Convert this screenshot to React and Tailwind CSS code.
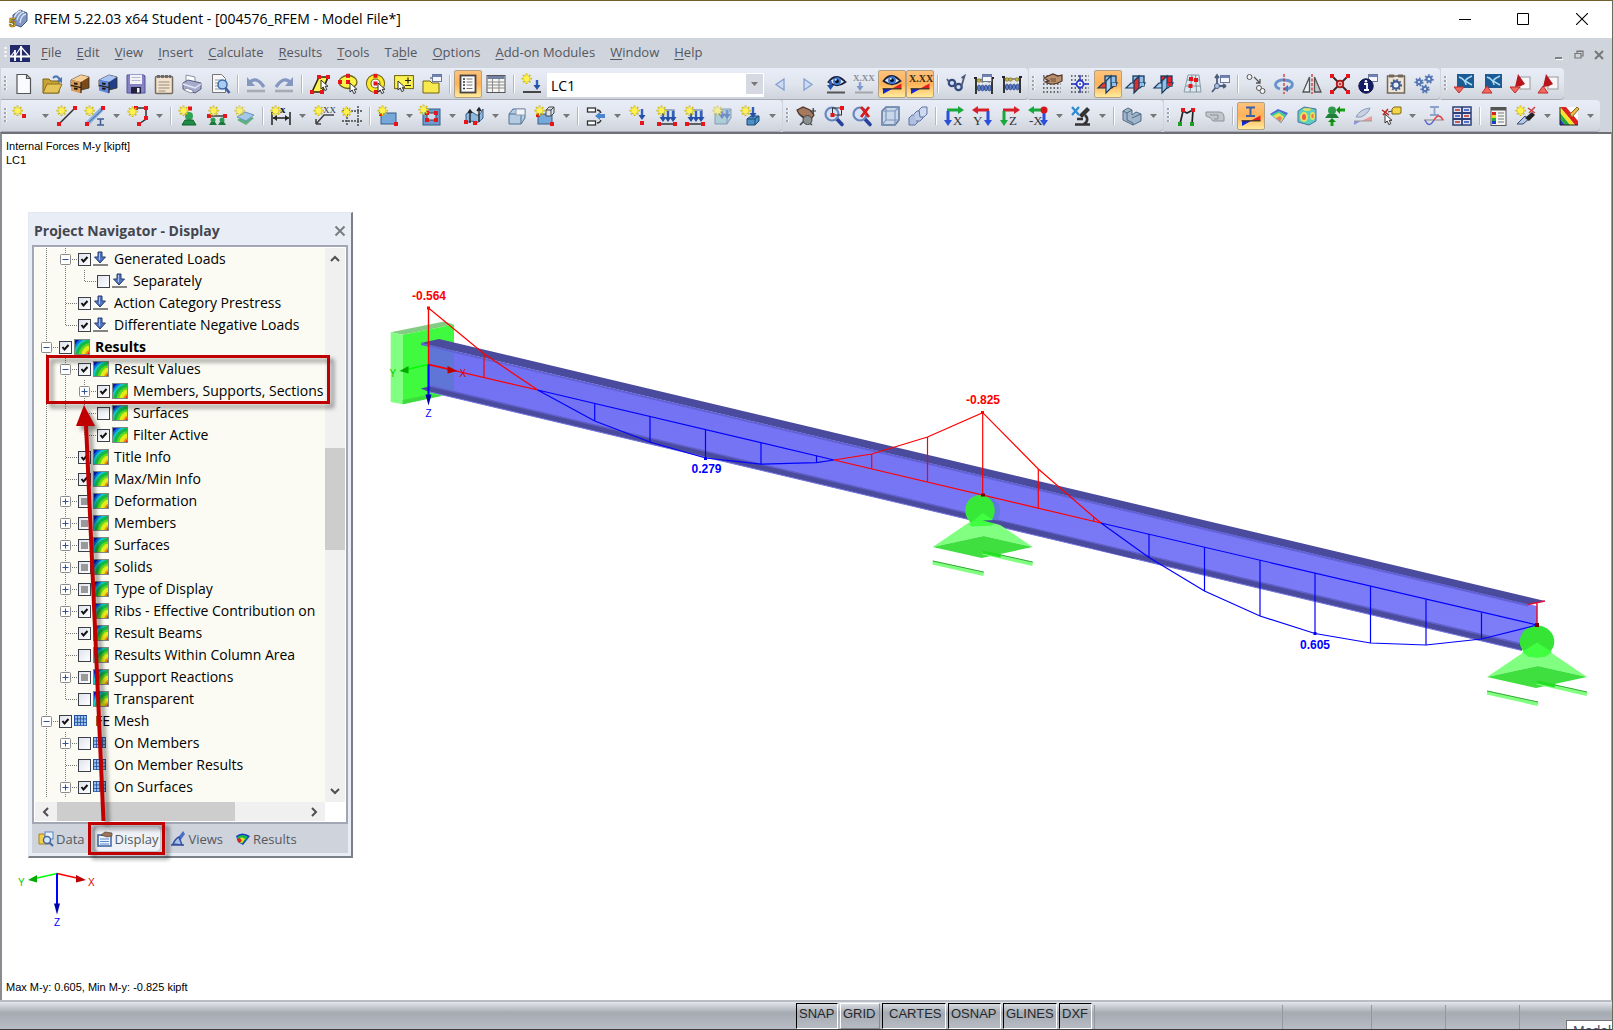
import React, { useState } from 'react';

/* ---------- small drawing parts shared by the icons ---------- */

const Star = ({ x = 0, y = 0 }) => (
  <g transform={`translate(${x - 0.5} ${y - 0.5})`}>
    <path d="M5 0v10.500M0 5.200h10.300M1.500 1.500l7.300 7.300M8.800 1.500L1.500 8.800" stroke="#c9b400" strokeWidth="1.700" />
    <path d="M5 1v8.500M1 5.200h8.300M2.200 2.200l5.800 5.800M8 2.200L2.200 8" stroke="#f6e63a" strokeWidth="1" />
    <circle cx="5.100" cy="5.200" r="2.600" fill="#fff251" />
  </g>
);

const Dot = ({ x, y, c = '#e8141c' }) => (
  <rect x={x - 2} y={y - 2} width="4" height="4" fill={c} />
);

const Cursor = ({ x = 0, y = 0 }) => (
  <path transform={`translate(${x} ${y})`} d="M0 0v9l2.200-2 1.600 3.600 2-1L4.200 6.300H7z" fill="#fff" stroke="#333" strokeWidth="1" />
);

const DownArrow = ({ x, y, h = 10 }) => (
  <g transform={`translate(${x} ${y})`}>
    <path d={`M0 0V${h - 3}`} stroke="#2f5fbf" strokeWidth="2.400" />
    <path d={`M-3.500 ${h - 5}H3.500L0 ${h}z`} fill="#2450a8" />
  </g>
);

const Cabinet = ({ front, side, top }) => (
  <>
    <path d="M1 6l10-5 8 2v11l-8 2-10-3z" fill={side} stroke="#3a2c1c" strokeWidth=".8" />
    <path d="M1 6l10-5 8 2-8 5z" fill={top} />
    <path d="M1 6l10 2v11.500L1 16.500z" fill={front} />
    <path d="M1 11.300l10 2.300M11 8v11" stroke="#2b2118" strokeWidth="1.200" />
    <path d="M4 9.300l3.500.7M4 14.300l3.500.7" stroke="#1d1611" strokeWidth="1.800" />
  </>
);

const Eye = ({ x = 10, y = 7 }) => (
  <g transform={`translate(${x} ${y})`}>
    <path d="M-8.500 1Q-1-9 8.500 1Q0 7.500-8.500 1z" fill="#dfe8f8" stroke="#1b2340" strokeWidth="1.800" />
    <circle r="3.900" cy=".2" fill="#3f77cf" />
    <circle r="1.900" cy=".2" fill="#081028" />
    <circle r=".9" cx="-1.200" cy="-1.200" fill="#fff" />
  </g>
);

const Wedge = () => (
  <>
    <path d="M1 20v-5h9z" fill="#1428d8" />
    <path d="M10 14.500l9.500-5v5z" fill="#e02020" />
    <path d="M.5 14.800h19" stroke="#2b2420" strokeWidth="1.200" />
  </>
);

const Abacus = ({ y = 3 }) => (
  <g transform={`translate(0 ${y})`}>
    <path d="M2 0v17M18 0v17M0 1h3M17 1h3" stroke="#222" strokeWidth="1.800" />
    <path d="M2 3h16M2 11h16" stroke="#444" />
    <g fill="#c9b640" stroke="#6c6120" strokeWidth=".6">
      <circle cx="5" cy="3.500" r="1.800" /><circle cx="8.500" cy="3.500" r="1.800" /><circle cx="15" cy="3.500" r="1.800" />
    </g>
    <g fill="#5b7fca" stroke="#253c7c" strokeWidth=".7">
      <ellipse cx="5" cy="11" rx="1.600" ry="3" /><ellipse cx="8.500" cy="11" rx="1.600" ry="3" />
      <ellipse cx="12" cy="11" rx="1.600" ry="3" /><ellipse cx="15.500" cy="11" rx="1.600" ry="3" />
    </g>
  </g>
);

const Window = ({ x, y }) => (
  <g transform={`translate(${x} ${y})`}>
    <rect x=".5" y=".5" width="9" height="7" fill="#f4f6fb" stroke="#6b7899" />
    <path d="M1 2h8" stroke="#6f83b8" strokeWidth="2" />
  </g>
);

const Planes = ({ a, b, c }) => (
  <>
    <rect x="7" y="2" width="11" height="10" fill={a} stroke="#173a5e" strokeWidth="1.300" />
    <path d="M0 14l5-5h14l-5 5z" fill={b} stroke="#173a5e" strokeWidth="1.200" />
    <path d="M8 7l5-5v12l-5 5z" fill={c} stroke="#173a5e" strokeWidth="1.200" />
    <path d="M14 9v3h4V9z" fill={a} />
  </>
);

const Grid = ({ c = '#444' }) => (
  <path d="M1 2h18M1 6h18M1 10h18M1 14h18M1 18h18" stroke={c} strokeWidth="1.500" strokeDasharray="1.500 2" />
);

const Lens = ({ children }) => (
  <>
    <path d="M11 11l7 7.500" stroke="#27429a" strokeWidth="3.600" strokeLinecap="round" />
    <circle cx="8" cy="8" r="6.500" fill="#d4e2f6" stroke="#6a86bd" strokeWidth="2.200" />
    {children}
  </>
);

const AxisView = ({ label, h, v, flip }) => (
  <>
    <path d={flip ? 'M17 4H5' : 'M3 4h12'} stroke={h} strokeWidth="3" />
    <path d={flip ? 'M6 0v8L0 4z' : 'M14 0v8l6-4z'} fill={h} />
    <path d={flip ? 'M16 5v10' : 'M4 5v10'} stroke={v} strokeWidth="3" />
    <path d={flip ? 'M12 14h8l-4 6z' : 'M0 14h8l-4 6z'} fill={v} />
    <text x={flip ? 1 : 9} y="19" fontSize="13" fontFamily="Liberation Serif" fill="#333">{label}</text>
  </>
);

const Gear = ({ x, y, r = 3, c = '#5577b4' }) => (
  <g transform={`translate(${x} ${y})`}>
    <circle r={r} fill="#e8effa" stroke={c} strokeWidth="2.200" />
    <circle r={r + 1.500} fill="none" stroke={c} strokeWidth="1.800" strokeDasharray="1.600 1.800" />
  </g>
);

const LoadComb = () => (
  <>
    <path d="M5 4h12v10" stroke="#55709e" strokeWidth="1.200" />
    {[6, 11, 16].map(x => <DownArrow key={x} x={x} y={5} h={11} />)}
    <path d="M2 18h16" stroke="#333" strokeWidth="1.500" />
    <Dot x={2} y={18} /><Dot x={18} y={18} />
    <Star />
  </>
);

const Block = ({ tint = '#8db4dc' }) => (
  <>
    <path d="M2 8l4-5h12v9l-4 6H2z" fill={tint} stroke="#4f7193" />
    <path d="M2 8h12v10M14 8l4-5" fill="none" stroke="#4f7193" />
  </>
);

/* ---------- toolbar icons, 20 x 20 ---------- */

const ICONS = {
  new: <path d="M3 .5h9.500l4 4v15H3zM12.500 .5v4h4" fill="#fafbfe" stroke="#555" strokeWidth="1.200" />,
  open: (
    <>
      <path d="M1 5h6l2 2h8v12H1z" fill="#c9a336" stroke="#7c6216" />
      <path d="M1 19l4-9h15l-4 9z" fill="#e5c55a" stroke="#8b701d" />
      <path d="M11 4q4-4 7 2" stroke="#4a76b4" strokeWidth="2.200" fill="none" />
      <path d="M20 3v6l-5-2z" fill="#4a76b4" />
    </>
  ),
  cabinet: <Cabinet front="#d99a55" side="#7a4a1c" top="#f4cf98" />,
  cabinetBlue: <Cabinet front="#5f88dc" side="#20408a" top="#a8c3f2" />,
  save: (
    <>
      <path d="M1 1h17l1 1v17H1z" fill="#8583c4" stroke="#55539a" />
      <rect x="4" y="1" width="12" height="9" fill="#f2f3fa" />
      <path d="M5.500 3.500h9M5.500 6.500h9" stroke="#b7b9cf" />
      <rect x="5" y="13" width="10" height="6.500" fill="#22223c" />
      <rect x="11" y="14" width="2.500" height="4.500" fill="#f0f0fa" />
    </>
  ),
  clipboard: (
    <>
      <rect x="1.500" y="2.500" width="17" height="17" rx="1" fill="#f2e3cf" stroke="#776b5e" strokeWidth="1.500" />
      <path d="M3 2.500h14" stroke="#6a6a72" strokeWidth="3" strokeDasharray="3 1" />
      <path d="M4.500 8h11M4.500 11h11M4.500 14h11M4.500 17h7" stroke="#9a8b7b" />
    </>
  ),
  print: (
    <>
      <path d="M4 1l9 2v7l-9-2z" fill="#fff" stroke="#8b8fa6" />
      <path d="M1 9l5-3 13 3v6l-6 4-12-4z" fill="#a7abcb" stroke="#565a7e" />
      <path d="M1 10l12 4 6-4" stroke="#e5e7f4" fill="none" strokeWidth="1.500" />
      <path d="M5 14l7 3-3 2-7-3z" fill="#fff" stroke="#8b8fa6" />
    </>
  ),
  preview: (
    <>
      <path d="M2.500 .5h9l4 4v14h-13z" fill="#f5f6f9" stroke="#777" />
      <path d="M5 6h7M5 9h5M5 12h4M5 15h5" stroke="#999" />
      <circle cx="12.500" cy="10.500" r="4.500" fill="#a9cdf0" stroke="#3c6aa8" strokeWidth="1.500" />
      <path d="M15.500 14l4 5" stroke="#3c5f98" strokeWidth="2.600" />
    </>
  ),
  undo: (
    <>
      <path d="M3 9q7-8 15 4" stroke="#8497c0" strokeWidth="3.200" fill="none" />
      <path d="M1 3v9h8z" fill="#8497c0" />
      <path d="M1 17h18" stroke="#a6aab4" strokeWidth="2.600" />
    </>
  ),
  redo: (
    <>
      <path d="M17 9Q10 1 2 13" stroke="#8497c0" strokeWidth="3.200" fill="none" />
      <path d="M19 3v9h-8z" fill="#8497c0" />
      <path d="M1 17h18" stroke="#a6aab4" strokeWidth="2.600" />
    </>
  ),
  selPoly: (
    <>
      <path d="M2 18L9 3h9l-6 15z" fill="#fbf151" stroke="#2a2508" strokeWidth="1.600" />
      <Dot x={9} y={3} /><Dot x={18} y={3} /><Dot x={2} y={18} /><Dot x={12} y={18} />
      <Cursor x={11} y={6} />
    </>
  ),
  selEllipse: (
    <>
      <ellipse cx="10" cy="8" rx="9" ry="6.500" fill="#fbf14a" stroke="#6e6410" strokeWidth="1.300" />
      <Dot x={10} y={1.800} /><Dot x={2} y={8} /><Dot x={10} y={8} />
      <Cursor x={12} y={9} />
    </>
  ),
  selRing: (
    <>
      <circle cx="9.500" cy="9.500" r="6.800" fill="#f3f5fa" stroke="#6e6410" strokeWidth="5.600" />
      <circle cx="9.500" cy="9.500" r="6.800" fill="none" stroke="#fbe92a" strokeWidth="3.600" />
      <Dot x={9.500} y={9.500} /><Dot x={9.500} y={1.800} /><Dot x={10} y={18} />
      <Cursor x={12} y={9} />
    </>
  ),
  selPlus: (
    <>
      <rect x=".6" y="1.600" width="18.800" height="13" fill="#fbf151" stroke="#6e6410" />
      <path d="M14 3.500v6M11 6.500h6M11 11.500h6" stroke="#222" strokeWidth="1.200" />
      <Cursor x={4} y={7} />
    </>
  ),
  selFolder: (
    <>
      <path d="M1 7h7l2 2h7v10H1z" fill="#f7e94e" stroke="#716612" />
      <path d="M8 4h3" stroke="#444" />
      <Window x={10} y={0} />
    </>
  ),
  navigator: (
    <>
      <rect x="2.500" y="1.500" width="15" height="17" fill="#fdfdfd" stroke="#444" strokeWidth="1.800" />
      <path d="M5 5h2M5 8h2M5 11h2M5 14.500h2" stroke="#333" strokeWidth="1.500" />
      <path d="M8.500 5h6M8.500 8h6M8.500 11h6M8.500 14.500h6" stroke="#777" strokeWidth="1.200" />
    </>
  ),
  table: (
    <>
      <rect x="1" y="1.500" width="18" height="17" fill="#f6f6f4" stroke="#555" />
      <rect x="1.500" y="2" width="17" height="3" fill="#7281a0" />
      <path d="M1 8h18M1 11h18M1 14h18M6.500 5v13M13 5v13" stroke="#8a8a8a" />
    </>
  ),
  newLoad: <><Star /><DownArrow x={15} y={6} h={10} /><path d="M1 18h18" stroke="#444" strokeWidth="2" /></>,
  prev: <path d="M14 5v11L6 10.500z" fill="#cddcf4" stroke="#84a0cf" strokeWidth="1.300" />,
  next: <path d="M6 5v11l8-5.500z" fill="#cddcf4" stroke="#84a0cf" strokeWidth="1.300" />,
  loadEye: <><Eye x={11} y={7} /><DownArrow x={4.500} y={7} h={9} /><path d="M1 18.500h18" stroke="#555" strokeWidth="2" /></>,
  loadVal: (
    <>
      <text x="-1" y="7" fontSize="9" fontWeight="bold" fontFamily="Liberation Serif" fill="#8b8d94">X.XX</text>
      <g opacity=".5"><DownArrow x={6} y={8} h={9} /></g>
      <path d="M1 18.500h18" stroke="#a5a7ac" strokeWidth="2" />
    </>
  ),
  resEye: <><Eye x={10} y={6} /><Wedge /></>,
  resVal: <><text x="-1" y="8" fontSize="10" fontWeight="bold" fontFamily="Liberation Serif" fill="#3b2a18">X.XX</text><Wedge /></>,
  glasses: (
    <>
      <circle cx="6" cy="9" r="3.200" fill="#cfe0f5" stroke="#34497e" strokeWidth="2.200" />
      <circle cx="12.500" cy="13" r="3.200" fill="#cfe0f5" stroke="#34497e" strokeWidth="2.200" />
      <path d="M3 8L1 5M9 10l1.500 1M15.500 12l3-10-3 2" stroke="#4f5a78" strokeWidth="1.800" fill="none" />
    </>
  ),
  abacusWin: <><Abacus /><Window x={8} y={0} /></>,
  abacus: <Abacus y={2} />,
  gridHand: <><Grid /><path d="M2 4l4-2 5-2 5 2 4-1v6l-4 2-4 1H8L3 8l4-1z" fill="#b98f6c" stroke="#4d3428" strokeWidth="1.200" /><path d="M8 5h6M9 7h5" stroke="#6b4a38" /></>,
  gridSnap: (
    <>
      <Grid />
      <path d="M10 1v18M1 10h18" stroke="#2a38c8" strokeWidth="1.500" />
      <circle cx="10" cy="10" r="3.500" fill="#fff" stroke="#2a38c8" strokeWidth="1.800" />
      <circle cx="10" cy="10" r="1" fill="#2a38c8" />
    </>
  ),
  planeXY: <Planes a="#8fc0e8" b="#e53c30" c="#a9d0ee" />,
  planeYZ: <Planes a="#8fc0e8" b="#a9d0ee" c="#e02c2c" />,
  planeXZ: <Planes a="#e5232b" b="#a9d0ee" c="#8fc0e8" />,
  gridTilt: (
    <>
      <path d="M6 1L2 18h17l-2-17z" fill="#dde8ee" stroke="#8c9ba4" />
      <path d="M5 6h13M3.500 12h15M10 1L8 18M13.500 1l1 17" stroke="#78909c" />
      <Dot x={9} y={5} /><Dot x={14} y={6} /><Dot x={8.500} y={12} />
    </>
  ),
  axesWin: <><path d="M7 2v10h9M7 12l-5 6M5 4l2-3 2 3M16 12l-3-2M16 12l-3 2" stroke="#4c5d7c" strokeWidth="1.800" fill="none" /><circle cx="7" cy="12" r="2.500" fill="#aac2e4" stroke="#4c5d7c" /><Window x={10} y={1} /></>,
  copy: (
    <g fill="#f3f4f6" stroke="#555">
      <circle cx="3.500" cy="3" r="2.500" />
      <path d="M8 3l6 6m0-4v4h-4" fill="none" strokeWidth="1.300" />
      <circle cx="13" cy="14" r="2.500" /><circle cx="16.500" cy="17" r="2.500" />
    </g>
  ),
  rotate: (
    <>
      <path d="M6 15q-6-2-4-6 3-4 9-3 9 1 7 6-1 2-5 3" fill="none" stroke="#6793cc" strokeWidth="2.800" />
      <path d="M14 11v7l-5-3z" fill="#4878b8" />
      <path d="M10 0v20" stroke="#d02020" strokeWidth="1.200" strokeDasharray="3 1.500" />
    </>
  ),
  mirror: (
    <>
      <path d="M7.500 3v15H1z" fill="#f0f1f4" stroke="#555" strokeWidth="1.300" />
      <path d="M12.500 3v15H19z" fill="#c6c8ce" stroke="#555" strokeWidth="1.300" />
      <path d="M10 0v20" stroke="#d02020" strokeWidth="1.200" strokeDasharray="3 1.500" />
    </>
  ),
  explode: (
    <>
      <path d="M2 2l16 16M18 2L2 18" stroke="#3c2424" strokeWidth="1.800" />
      <circle cx="10" cy="10" r="3.300" fill="#f3b0b0" stroke="#b01818" strokeWidth="1.800" />
      <circle cx="10" cy="10" r="1" fill="#b01818" />
      <Dot x={2} y={2} /><Dot x={18} y={2} /><Dot x={2} y={18} /><Dot x={18} y={18} />
    </>
  ),
  info: (
    <>
      <Window x={10} y={0} />
      <circle cx="8" cy="12" r="7.200" fill="#141c66" stroke="#0b1040" />
      <path d="M6 10h3v6M6 16h5" stroke="#fff" strokeWidth="1.800" fill="none" />
      <circle cx="8" cy="7.300" r="1.300" fill="#fff" />
    </>
  ),
  settings: (
    <>
      <rect x="1.500" y="2" width="17" height="17" fill="#f0e5d4" stroke="#6f675c" strokeWidth="1.500" />
      <path d="M3 2h5M12 2h5" stroke="#6f675c" strokeWidth="3" />
      <Gear x={10} y={11} r={3.600} c="#3e5c92" />
    </>
  ),
  gears: <><Gear x={5} y={8} r={2.200} /><Gear x={15} y={5} r={2.400} /><Gear x={11} y={15} r={2.200} /></>,
  dxIn: <><rect x="3" y="0" width="17" height="14" fill="#1c5a94" /><path d="M5 3q6 2 7 8M18 2q-5 2-7 5l7 4" stroke="#a8dcf5" strokeWidth="1.500" fill="none" /><path d="M0 13h10l-5 6z" fill="#f06a62" stroke="#c22a26" /></>,
  dxOut: <><rect x="3" y="0" width="17" height="14" fill="#1c5a94" /><path d="M5 3q6 2 7 8M18 2q-5 2-7 5l7 4" stroke="#a8dcf5" strokeWidth="1.500" fill="none" /><path d="M0 19h10l-5-7z" fill="#f06a62" stroke="#c22a26" /></>,
  pdfIn: <><rect x="10" y="3" width="10" height="12" fill="#f6f6f8" stroke="#999" /><path d="M5 13L8 0l7 10-4 2z" fill="#b8141c" /><path d="M0 13h10l-5 6z" fill="#f06a62" stroke="#c22a26" /></>,
  pdfOut: <><rect x="10" y="3" width="10" height="12" fill="#f6f6f8" stroke="#999" /><path d="M5 13L8 0l7 10-4 2z" fill="#b8141c" /><path d="M0 19h10l-5-7z" fill="#f06a62" stroke="#c22a26" /></>,

  node: <><Star x={-1} /><Dot x={10} y={10} /></>,
  line: <><path d="M2 18L18 2" stroke="#333" strokeWidth="1.600" /><Dot x={2} y={18} /><Dot x={18} y={2} /><Star /></>,
  member: (
    <>
      <path d="M3 17L17 3" stroke="#87aee0" strokeWidth="4.500" />
      <path d="M2 18L18 3" stroke="#44638e" />
      <Dot x={2} y={18} /><Dot x={18} y={2} /><Star />
      <path d="M12 13h7M12 19h7M15.500 13v6" stroke="#3d5f95" strokeWidth="1.600" />
    </>
  ),
  polyline: <><path d="M8 2h10v11l-7 5" stroke="#333" fill="none" strokeWidth="1.500" /><Dot x={8} y={2} /><Dot x={18} y={2} /><Dot x={18} y={12} /><Dot x={11} y={18} /><Star y={1} /></>,
  nodeSupport: <><Dot x={11} y={2.500} /><circle cx="10" cy="10" r="4" fill="#30a456" /><path d="M3 19l3-5h8l3 5z" fill="#1f8d44" stroke="#12612c" /><Star /></>,
  lineSupport: <><path d="M1 10h18" stroke="#333" strokeWidth="1.400" /><circle cx="6" cy="14" r="2.500" fill="#2a9b4e" /><circle cx="15" cy="14" r="2.500" fill="#2a9b4e" /><path d="M2 19l2-3h4l2 3zM11 19l2-3h4l2 3z" fill="#1b7a3a" /><Dot x={2} y={10} /><Dot x={18} y={10} /><Star x={2} /></>,
  surfSupport: <><path d="M2 14l8-5 9 3-8 7z" fill="#5fb083" /><path d="M2 11l8-5 9 3-8 6z" fill="#a4c8e8" stroke="#6d96b8" /><g opacity=".8"><Star /></g></>,
  dimension: <><path d="M1 6v13M19 6v13M2 12h16" stroke="#222" strokeWidth="1.500" /><path d="M2 12l4-3v6zM18 12l-4-3v6z" fill="#222" /><text x="9" y="7" fontSize="11" fontWeight="bold" fontFamily="Liberation Serif" fill="#222">x</text><Star /></>,
  comment: <><path d="M2 18l8-9h10M2 18v-5M2 18h5" stroke="#444" fill="none" strokeWidth="1.600" /><text x="9" y="7" fontSize="9" fontFamily="Liberation Serif" fill="#333">XX</text><Star /></>,
  guide: <><path d="M5 2v18M16 0v20M0 5h20M0 15h20" stroke="#444" strokeWidth="1.400" strokeDasharray="2 1" /><Star y={1} /></>,
  surface: <><rect x="3" y="7" width="15" height="11" fill="#77a8da" stroke="#375f89" /><Dot x={3} y={8} /><Dot x={18} y={18} /><Star /></>,
  opening: <><rect x="2" y="3" width="17" height="16" fill="#6b9ccd" stroke="#375f89" /><rect x="6" y="7" width="9" height="7" fill="#c7d9ec" stroke="#444" /><Dot x={6} y={7} /><Dot x={15} y={7} /><Dot x={6} y={14} /><Dot x={15} y={14} /><Star x={-2} y={-1} /></>,
  curved: <><path d="M2 8q5-4 9 0t8-5v9q-5 6-8 4t-9 1z" fill="#8fb8de" stroke="#375f89" /><path d="M6 4v13M15 2v14M4 7l2-3 2 3M13 5l2-3 2 3" stroke="#222" strokeWidth="1.400" fill="none" /><Dot x={2} y={16} /><Dot x={11} y={17} /></>,
  solid: <><Block tint="#b4cbe2" /><rect x="9" y="3" width="9" height="6" fill="#f0f3f8" stroke="#8f9db5" /></>,
  solidSet: <><rect x="3" y="8" width="14" height="10" fill="#77a8da" stroke="#375f89" /><path d="M11 4l3-3h5v6l-3 3h-5zM11 4h5v6M16 4l3-3" fill="#dce4ee" stroke="#444" /><Dot x={3} y={9} /><Dot x={17} y={18} /><Star /></>,
  connect: <><rect x="1.500" y="2" width="8" height="4" fill="#fff" stroke="#333" strokeWidth="1.300" /><rect x="1.500" y="15" width="8" height="4" fill="#fff" stroke="#333" strokeWidth="1.300" /><path d="M11 4q3 0 4 3M11 17q3 0 4-3" stroke="#333" fill="none" strokeWidth="1.300" /><path d="M13 8h6v4h-6z" fill="#4a86cf" /><path d="M14 6v8l-5-4z" fill="#4a86cf" /></>,
  nodalLoad: <><DownArrow x={13} y={3} h={11} /><Dot x={13} y={17} /><Star x={1} /></>,
  loadComb: <LoadComb />,
  surfLoad: <g opacity=".6"><Block tint="#8fc2cf" /><DownArrow x={9} y={4} h={9} /><DownArrow x={14} y={4} h={9} /><Star /></g>,
  solidLoad: <><path d="M6 13l4-3h8v5l-4 4H6z" fill="#4d90c6" stroke="#1f4c74" /><path d="M6 13h8v6M14 13l4-3" stroke="#1f4c74" fill="none" /><DownArrow x={12} y={1} h={11} /><Star /></>,

  pan: <><path d="M1 4l6-3 7 3 4 5-3 4-6-1-6-4z" fill="#a5795c" stroke="#4d3428" strokeWidth="1.200" /><path d="M4 9l12 10M4 19l9-9" stroke="#444" strokeWidth="1.600" /><circle cx="11.500" cy="14" r="4.500" fill="#8b8f8f" stroke="#444" /><path d="M14.500 5h5.500M17.200 2v6" stroke="#333" strokeWidth="1.200" /></>,
  zoomWin: <Lens><rect x="8.500" y="2" width="9" height="7" fill="none" stroke="#333" /><Dot x={8.500} y={9} /><Dot x={18} y={2} /></Lens>,
  zoomOff: <Lens><path d="M9 1l8 10M17 1L9 11" stroke="#d81a1a" strokeWidth="2.800" /></Lens>,
  wireCube: <><path d="M2 5l4-4h13v13l-4 5H2z" fill="#c9d7ea" stroke="#5e779f" strokeWidth="1.500" /><path d="M2 5h13v14M15 5l4-4M6 1v13h13M6 14l-4 5" fill="none" stroke="#7f96bb" strokeWidth="1.200" /></>,
  cascade: <><path d="M1 12l3-3h6v7l-3 3H1z" fill="#aebfe0" stroke="#5e729f" /><path d="M6 8l3-3h6v7l-3 3H8" fill="#bccbe8" stroke="#5e729f" /><path d="M11 4l3-3h5v7l-3 3h-4z" fill="#cfdaf0" stroke="#5e729f" /></>,
  viewX: <AxisView label="X" h="#18a83c" v="#2a4fd8" />,
  viewY: <AxisView label="Y" h="#d8202a" v="#2a4fd8" flip />,
  viewZ: <AxisView label="Z" h="#d8202a" v="#18a83c" />,
  viewMinusX: <><AxisView label="-X" h="#18a83c" v="#2a4fd8" flip /><circle cx="16" cy="4" r="3.500" fill="#d8141c" /></>,
  microscope: <><path d="M8 9l8-8 3 3-8 8z" fill="#333" /><path d="M4 18.500h15M14 9q5 5-1 9M6 13h6" stroke="#333" strokeWidth="2.600" fill="none" /><path d="M1 1l7 8M8 1L1 9" stroke="#2c8ad0" strokeWidth="2.200" /></>,
  lSolid: <><path d="M1 5l5-3 4 2v5l4-3 5 2v7l-8 4-10-5z" fill="#9fb6cc" stroke="#51697f" /><path d="M1 5l4 2v7l6 3v2M5 7l5-3M10 12l9-4" fill="none" stroke="#51697f" /></>,

  frame: <><path d="M3 18L6 5l4 2 6-3-1 14" stroke="#222" strokeWidth="1.700" fill="none" /><Dot x={6} y={4} /><Dot x={16} y={4} /><Dot x={3} y={18} c="#18a020" /><Dot x={15} y={18} c="#18a020" /></>,
  plate: <><path d="M1 6h13q5 0 5 5v4H8q-2-4-7-5z" fill="#c3c6cc" stroke="#8d9199" /><path d="M5 9h8v4H9" fill="none" stroke="#8d9199" /></>,
  diagram: <><path d="M5 1.500h9M5 10h9M9.500 1.500V10" stroke="#3c5fa8" strokeWidth="2" /><Wedge /></>,
  rainbow: (
    <>
      <path d="M1 8l8-5 10 4-7 10z" fill="#4c6ad8" />
      <path d="M2 9l8-4 7 4-5 7z" fill="#46cf9a" />
      <path d="M4 10l6-3 5 4-3 5z" fill="#e9e25a" />
      <path d="M7 12l4-2 2 2-2 4z" fill="#ef7d5c" />
    </>
  ),
  rainbowSolid: (
    <>
      <path d="M1 5l6-4 12 2v12l-7 4-11-3z" fill="#5bcfc0" stroke="#4a72a0" />
      <ellipse cx="7" cy="11" rx="4" ry="5" fill="#e9e25a" /><ellipse cx="7" cy="11" rx="2" ry="3" fill="#ef5a4c" />
      <ellipse cx="15.500" cy="10" rx="2.500" ry="4" fill="#e9e25a" /><ellipse cx="15.500" cy="10" rx="1.200" ry="2.200" fill="#ef7a4c" />
      <ellipse cx="10" cy="3.500" rx="4" ry="1.300" fill="#e9e25a" />
    </>
  ),
  reaction: <><circle cx="7" cy="4.500" r="4" fill="#2c9a4a" /><path d="M0 12l3-4h8l3 4z" fill="#1f7f3a" /><path d="M20 4h-5" stroke="#12a012" strokeWidth="3" /><path d="M15 0v8l-4-4z" fill="#0f8a0f" /><path d="M7 20v-5" stroke="#12a012" strokeWidth="3" /><path d="M3 16h8l-4-4z" fill="#0f8a0f" /></>,
  section: <><path d="M3 11q4-8 14-9-2 6-9 9z" fill="#c9d2e4" stroke="#8a98b4" /><path d="M1 19v-4h7z" fill="#8a97e0" /><path d="M8 15l11-5v5z" fill="#ee9a9a" /><path d="M1 15h18" stroke="#999" /></>,
  valueCursor: <><path d="M1 4l7 5M7 3L2 9" stroke="#c02020" strokeWidth="1.500" /><path d="M7 6l4-1" stroke="#333" /><path d="M11 3l2-2h7v6l-2 1h-7z" fill="#f2d648" stroke="#7a6818" /><Cursor x={4} y={8} /></>,
  sectionCurve: <><path d="M6 1h9M6 9h9M10.500 1v8" stroke="#8ea2cc" strokeWidth="1.800" /><path d="M0 14h20" stroke="#888" /><path d="M1 14q4 9 9 0" fill="none" stroke="#5868d0" strokeWidth="1.500" /><path d="M10 14q5-8 9 0" fill="none" stroke="#e04848" strokeWidth="1.500" /></>,
  multiTable: <><rect x="1" y="1" width="18" height="18" fill="#dfe3ef" stroke="#2d3f76" strokeWidth="1.500" /><path d="M1 7h18M1 13h18M10 1v18" stroke="#2d3f76" strokeWidth="1.800" /><path d="M3 4h5M12 10h5M3 16h5" stroke="#c42a2a" strokeWidth="1.500" /><path d="M12 4h5M3 10h5M12 16h5" stroke="#2c4cc4" strokeWidth="1.500" /></>,
  legend: <><rect x="3" y="1.500" width="15" height="18" fill="#f5f5f5" stroke="#555" /><path d="M3 3h15" stroke="#555" strokeWidth="3" /><path d="M6 6v3" stroke="#d82020" strokeWidth="4" /><path d="M6 9v3" stroke="#e8d820" strokeWidth="4" /><path d="M6 12v3" stroke="#20a838" strokeWidth="4" /><path d="M6 15v3" stroke="#2038c8" strokeWidth="4" /><path d="M10 7h6M10 10h6M10 13h6M10 16h6" stroke="#777" /></>,
  cut: <><path d="M1 18l8-8 4 3-6 5z" fill="#b8c8e4" stroke="#344c78" /><path d="M9 12l7-6 3 3-6 6z" fill="#222" /><path d="M12 2l7 5M19 1l-6 6" stroke="#c84040" strokeWidth="1.500" /><Star /></>,
  colors: (
    <>
      <rect x="1" y="1" width="18" height="18" fill="#fff" />
      <path d="M1 1h6l12 14v4h-3z" fill="#e02020" />
      <path d="M1 1l15 18h-5L1 7z" fill="#f4e428" />
      <path d="M1 7l10 12H6L1 13z" fill="#28a838" />
      <path d="M1 13l5 6H1z" fill="#2038c8" />
      <path d="M11 8l7-7 2 2-7 8z" fill="#e9b84a" stroke="#8c6a1c" />
      <path d="M1 1v18h18" fill="none" stroke="#222" />
    </>
  ),
};

/* '|' is a separator, 'v' a drop-down arrow, a trailing * marks a pressed button */
const ROW1_FILE = ['new', 'open', 'cabinet', 'cabinetBlue', 'save', 'clipboard', 'print', 'preview', '|', 'undo', 'redo', '|', 'selPoly', 'selEllipse', 'selRing', 'selPlus', 'selFolder', '|', 'navigator*', 'table', '|', 'newLoad', 'combo', 'prev', 'next', 'loadEye', 'loadVal', 'resEye*', 'resVal*', '|', 'glasses', 'abacusWin', 'abacus'];
const ROW1_GRID = ['gridHand', 'gridSnap', 'planeXY*', 'planeYZ', 'planeXZ', 'gridTilt', 'axesWin', '|', 'copy', 'rotate', 'mirror', 'explode', 'info', 'settings', 'gears'];
const ROW1_EXPORT = ['dxIn', 'dxOut', 'pdfIn', 'pdfOut'];
const ROW2_MODEL = ['node', 'v', 'line', 'member', 'v', 'polyline', 'v', '|', 'nodeSupport', 'lineSupport', 'surfSupport', '|', 'dimension', 'v', 'comment', 'guide', '|', 'surface', 'v', 'opening', 'v', 'curved', 'v', 'solid', 'solidSet', 'v', '|', 'connect', 'v', 'nodalLoad', 'loadComb', 'loadComb', 'surfLoad', 'solidLoad', 'v'];
const ROW2_VIEW = ['pan', 'zoomWin', 'zoomOff', 'wireCube', 'cascade', '|', 'viewX', 'viewY', 'viewZ', 'viewMinusX', 'v', 'microscope', 'v', '|', 'lSolid', 'v'];
const ROW2_RESULT = ['frame', 'plate', '|', 'diagram*', 'rainbow', 'rainbowSolid', 'reaction', 'section', 'valueCursor', 'v', 'sectionCurve', 'multiTable', '|', 'legend', 'cut', 'v', 'colors', 'v'];

const MENU = [
  ['', 'F', 'ile'], ['', 'E', 'dit'], ['', 'V', 'iew'], ['', 'I', 'nsert'], ['', 'C', 'alculate'], ['', 'R', 'esults'],
  ['', 'T', 'ools'], ['Ta', 'b', 'le'], ['', 'O', 'ptions'], ['', 'A', 'dd-on Modules'], ['', 'W', 'indow'], ['', 'H', 'elp'],
];

/* guides: one character per column. | line, T tee, L elbow, + and - expander */
const TREE = [
  { guides: '|-', state: 'on', icon: 'load', label: 'Generated Loads' },
  { guides: '||L', state: 'off', icon: 'load', label: 'Separately' },
  { guides: '|T', state: 'on', icon: 'load', label: 'Action Category Prestress' },
  { guides: '|L', state: 'on', icon: 'load', label: 'Differentiate Negative Loads' },
  { guides: '-', state: 'on', icon: 'result', label: 'Results', bold: true },
  { guides: '|-', state: 'on', icon: 'result', label: 'Result Values' },
  { guides: '||+', state: 'on', icon: 'result', label: 'Members, Supports, Sections' },
  { guides: '||T', state: 'off', icon: 'result', label: 'Surfaces' },
  { guides: '||L', state: 'on', icon: 'result', label: 'Filter Active' },
  { guides: '|T', state: 'on', icon: 'result', label: 'Title Info' },
  { guides: '|T', state: 'on', icon: 'result', label: 'Max/Min Info' },
  { guides: '|+', state: 'mixed', icon: 'result', label: 'Deformation' },
  { guides: '|+', state: 'mixed', icon: 'result', label: 'Members' },
  { guides: '|+', state: 'mixed', icon: 'result', label: 'Surfaces' },
  { guides: '|+', state: 'mixed', icon: 'result', label: 'Solids' },
  { guides: '|+', state: 'mixed', icon: 'result', label: 'Type of Display' },
  { guides: '|+', state: 'on', icon: 'result', label: 'Ribs - Effective Contribution on' },
  { guides: '|T', state: 'on', icon: 'result', label: 'Result Beams' },
  { guides: '|T', state: 'off', icon: 'result', label: 'Results Within Column Area' },
  { guides: '|+', state: 'mixed', icon: 'result', label: 'Support Reactions' },
  { guides: '|L', state: 'off', icon: 'result', label: 'Transparent' },
  { guides: '-', state: 'on', icon: 'mesh', label: 'FE Mesh' },
  { guides: '|+', state: 'off', icon: 'mesh', label: 'On Members' },
  { guides: '|T', state: 'off', icon: 'mesh', label: 'On Member Results' },
  { guides: '|+', state: 'on', icon: 'mesh', label: 'On Surfaces' },
];

const ToolButton = ({ name }) => {
  const pressed = name.endsWith('*');
  const key = pressed ? name.slice(0, -1) : name;
  return (
    <button
      type="button"
      aria-label={key}
      className={`flex h-7 w-7 shrink-0 items-center justify-center ${pressed ? 'rounded-xs border border-[#b3a183] bg-linear-to-b from-[#fdc27c] via-[#ffb257] to-[#ffeb9c]' : ''}`}
    >
      <svg width="20" height="20" viewBox="0 0 20 20" fill="none" className="shrink-0 overflow-visible">{ICONS[key]}</svg>
    </button>
  );
};

const LoadCaseSelect = () => (
  <div className="relative mr-0.5 ml-px h-[22px] w-[217px] shrink-0 bg-white">
    <select aria-label="Load case" className="h-full w-full appearance-none bg-white pl-1 text-sm text-black outline-none">
      <option>LC1</option>
    </select>
    <span className="pointer-events-none absolute inset-y-px right-px flex w-[17px] items-center justify-center bg-[#d6d9e1]">
      <svg width="7" height="4" viewBox="0 0 7 4"><path d="M0 0h7L3.500 4z" fill="#777" /></svg>
    </span>
  </div>
);

const ToolGroup = ({ items }) => (
  <div className="flex h-8 shrink-0 items-center rounded-r-sm border-b border-[#a8acb6] bg-linear-to-b from-[#e9edf7] via-[#e1e5ee] to-[#cfd3dc] pr-0.5">
    <svg width="9" height="18" viewBox="0 0 9 18" className="shrink-0">
      <path d="M4.500 1v16" stroke="#fff" strokeWidth="3" strokeDasharray="2 2" />
      <path d="M4 1v16" stroke="#9ea3ae" strokeWidth="2" strokeDasharray="2 2" />
    </svg>
    {items.map((item, index) => {
      if (item === '|') {
        return (
          <span key={index} className="flex w-2 shrink-0 justify-center">
            <span className="h-[18px] w-0.5 border-r border-l border-r-white border-l-[#b4b8c1]"></span>
          </span>
        );
      }
      if (item === 'v') {
        return (
          <button key={index} type="button" aria-label="More" className="flex h-7 w-[15px] shrink-0 items-center justify-center">
            <svg width="7" height="4" viewBox="0 0 7 4"><path d="M0 0h7L3.500 4z" fill="#777" /></svg>
          </button>
        );
      }
      if (item === 'combo') return <LoadCaseSelect key={index} />;
      return <ToolButton key={index} name={item} />;
    })}
  </div>
);

/* ---------- navigator tree ---------- */

const Guide = ({ type, last }) => {
  const w = last ? 22 : 19;
  const box = type === '+' || type === '-';
  return (
    <svg width={w} height="22" viewBox={`0 0 ${w} 22`} fill="none" className="shrink-0">
      <path d={type === 'L' ? 'M9.500 0V11' : 'M9.500 0V22'} stroke="#777" strokeDasharray="1 1" />
      {last && <path d="M10 11.500H21" stroke="#777" strokeDasharray="1 1" />}
      {box && (
        <>
          <rect x="4.500" y="6.500" width="10" height="10" rx="1" fill="#fff" stroke="#8b8b8b" />
          <path d={type === '+' ? 'M6.500 11.500h6M9.500 8.500v6' : 'M6.500 11.500h6'} stroke="#33529c" />
        </>
      )}
    </svg>
  );
};

const TreeIcon = ({ kind }) => {
  if (kind === 'load') {
    return (
      <svg width="16" height="16" viewBox="0 0 16 16" fill="none" className="shrink-0">
        <path d="M5 1h4v5h3.500l-5.500 6L1.500 6H5z" fill="#5276c0" stroke="#263c70" />
        <path d="M6.500 2v7" stroke="#a9c0ee" />
        <path d="M0 14h15" stroke="#777" strokeWidth="1.800" />
      </svg>
    );
  }
  if (kind === 'mesh') {
    return (
      <svg width="16" height="16" viewBox="0 0 16 16" className="shrink-0">
        <rect x="0" y="2" width="13" height="11" fill="#1f4f9c" />
        {[0, 1, 2, 3].map(c => [0, 1, 2].map(r => (
          <rect key={`${c}${r}`} x={1 + c * 3} y={3 + r * 3.400} width="2.200" height="2.500" fill="#9cc3f0" />
        )))}
      </svg>
    );
  }
  return (
    <svg width="16" height="16" viewBox="0 0 16 16" className="shrink-0 overflow-hidden">
      <rect width="16" height="16" fill="#0c18b8" />
      <circle cx="18" cy="17" r="20.500" fill="#1070e0" />
      <circle cx="18" cy="17" r="18.500" fill="#12c8d0" />
      <circle cx="18" cy="17" r="16.500" fill="#14b848" />
      <circle cx="18" cy="17" r="13.500" fill="#5cd820" />
      <circle cx="18" cy="17" r="11" fill="#e6ea18" />
      <circle cx="18" cy="17" r="7" fill="#f09018" />
      <circle cx="18" cy="17" r="5" fill="#e01818" />
      <rect x=".5" y=".5" width="15" height="15" fill="none" stroke="#7f8a86" />
    </svg>
  );
};

const TreeRow = ({ row, id }) => {
  const [checked, setChecked] = useState(row.state === 'on');
  return (
    <li className="flex h-[22px] items-center whitespace-nowrap">
      {row.guides.split('').map((g, i) => (
        <Guide key={i} type={g} last={i === row.guides.length - 1} />
      ))}
      <span className="relative mr-0.5 flex size-[13px] shrink-0">
        <input
          id={id}
          type="checkbox"
          checked={checked}
          onChange={e => setChecked(e.target.checked)}
          className="size-[13px] appearance-none border border-[#3c4048] bg-linear-to-br from-[#dfe3ec] to-white"
        />
        {checked && (
          <svg width="13" height="13" viewBox="0 0 13 13" className="pointer-events-none absolute inset-0">
            <path d="M3.500 6l2 2.500 4-4.500" fill="none" stroke="#111" strokeWidth="2" />
          </svg>
        )}
        {row.state === 'mixed' && !checked && (
          <span className="pointer-events-none absolute inset-[3px] bg-[#999]"></span>
        )}
      </span>
      <TreeIcon kind={row.icon} />
      <label htmlFor={id} className={`pl-[5px] text-sm leading-5 text-black ${row.bold ? 'font-bold' : ''}`}>{row.label}</label>
    </li>
  );
};

const Chevron = ({ d }) => (
  <svg width="10" height="10" viewBox="0 0 10 10" fill="none"><path d={d} stroke="#505050" strokeWidth="2" /></svg>
);

const TABS = [
  {
    label: 'Data',
    icon: (
      <>
        <path d="M1 3h5l1 2h5v8H1z" fill="#f2cf4a" stroke="#a98418" />
        <rect x="7" y="1" width="8" height="7" fill="#e8f0fb" stroke="#5a80bd" />
        <circle cx="9" cy="9" r="3.500" fill="#d8e8fa" stroke="#3f68a8" strokeWidth="1.500" />
        <path d="M12 12l3 3" stroke="#3f68a8" strokeWidth="2" />
      </>
    ),
  },
  {
    label: 'Display',
    active: true,
    icon: (
      <>
        <rect x="1" y="4" width="13" height="11" fill="#eef4fc" stroke="#3b62a0" strokeWidth="1.500" />
        <path d="M3 8h9M3 10.500h9M3 13h9" stroke="#5b88cc" />
        <path d="M4 4l4-3 7 1v3l-5 1z" fill="#9a7558" stroke="#5c4534" strokeWidth=".7" />
      </>
    ),
  },
  {
    label: 'Views',
    icon: (
      <>
        <path d="M7 8l6-8 2 3-5 7z" fill="#4a6fc8" />
        <path d="M1 14h13M3 13q2-5 6-7l3 8z" fill="#a8bfe8" stroke="#3450a0" strokeWidth="1.500" />
      </>
    ),
  },
  {
    label: 'Results',
    icon: (
      <>
        <path d="M1 5q6-5 14 0l-7 9-5-3z" fill="#1838c8" />
        <path d="M2 6q6-4 11 0l-6 7-3-2z" fill="#18b848" />
        <path d="M3 8q4-3 7 0l-3 4-3-1z" fill="#f0e020" />
        <path d="M2 8l3-1 2 3-3 2z" fill="#e02020" />
      </>
    ),
  },
];

const Navigator = () => (
  <section className="absolute top-[78px] left-[26px] flex w-[325px] flex-col border-t border-r-2 border-b-2 border-l border-t-[#e3e7f0] border-r-[#7b7f88] border-b-[#7b7f88] border-l-[#e3e7f0] bg-[#e9edf6] px-[3px] pb-[3px]">
    <header className="flex h-8 items-center justify-between pt-1 pr-0.5 pl-0.5">
      <h2 className="text-sm font-bold text-[#44464e]">Project Navigator - Display</h2>
      <button type="button" aria-label="Close navigator">
        <svg width="12" height="12" viewBox="0 0 12 12"><path d="M1.500 1.500l9 9M10.500 1.500l-9 9" stroke="#77797f" strokeWidth="1.800" /></svg>
      </button>
    </header>

    <div className="border-2 border-[#a3a7b3] bg-white p-px">
      <div className="flex">
        <ul className="min-w-0 flex-1 overflow-hidden bg-[#fbfbf3] pb-1 pl-0.5">
          {TREE.map((row, index) => <TreeRow key={index} row={row} id={`item-${index}`} />)}
        </ul>
        <div className="flex w-5 shrink-0 flex-col items-center bg-[#f0f0f0] py-1.5">
          <Chevron d="M1 7l4-4 4 4" />
          <div className="mt-[184px] h-[102px] w-full bg-[#cdcdcd]"></div>
          <div className="mt-auto"><Chevron d="M1 3l4 4 4-4" /></div>
        </div>
      </div>
      <div className="mr-5 flex h-[19px] items-center bg-[#f0f0f0] px-1.5">
        <Chevron d="M7 1L3 5l4 4" />
        <div className="ml-1.5 h-full w-[178px] bg-[#cdcdcd]"></div>
        <div className="ml-auto"><Chevron d="M3 1l4 4-4 4" /></div>
      </div>
    </div>

    <nav className="flex h-[29px] items-center gap-2 bg-[#cfd3dc] pl-1 text-[13px] text-[#55585f]">
      {TABS.map(tab => (
        <button
          key={tab.label}
          type="button"
          className={`flex h-6 items-center gap-0.5 px-0.5 ${tab.active ? 'rounded-sm bg-[#eef1f6] shadow-sm' : ''}`}
        >
          <svg width="16" height="16" viewBox="0 0 16 16" fill="none">{tab.icon}</svg>
          {tab.label}
        </button>
      ))}
    </nav>
  </section>
);

/* ---------- structural model with moment diagram ---------- */

const BASE = [
  [428.5, 364.5], [484, 377.5], [539.5, 390.5], [594.7, 403.5], [650, 416.5], [705.5, 429.5], [761, 442.5], [816.5, 455.7],
  [871.7, 468.7], [927.5, 481.7], [982.7, 495], [1038.3, 507.7], [1093.7, 521], [1149, 534], [1204.5, 547],
  [1260, 560], [1315, 573], [1370.5, 586], [1426, 599.5], [1481.5, 612.5], [1537, 625],
];
const MOMENT = [308, 353.7, 390.5, 421, 442, 458, 464.2, 462.7, 454, 437, 412.7, 469, 517, 557.5, 591, 616, 633.5, 643, 645, 639, 625];

const Support = ({ x, y }) => (
  <g transform={`translate(${x} ${y})`}>
    <path d="M-50 52L-13 27h26L50 52 1 41z" fill="#80ff80" />
    <path d="M-50 52L1 41l49 11L-1 63z" fill="#3fdf3f" />
    <path d="M-50 67.500L1 79" stroke="#80ff80" strokeWidth="4" />
    <path d="M-50 66L1 77" stroke="#3aa63a" strokeWidth="1" />
    <path d="M0 57.500L50 69" stroke="#80ff80" strokeWidth="4" />
    <path d="M0 56L50 67" stroke="#3aa63a" strokeWidth="1" />
    <path d="M0 57l18 4" stroke="#22e022" strokeWidth="3" />
  </g>
);

const Axes = ({ x, y }) => (
  <g transform={`translate(${x} ${y})`} fontSize="10" fontFamily="Liberation Sans" fill="none">
    <path d="M0 0L22 5" stroke="#f00" strokeWidth="1.600" />
    <path d="M19 1.500l10 5-10 2.500z" fill="#b00" />
    <path d="M0 0L-22 5" stroke="#0f0" strokeWidth="1.600" />
    <path d="M-20 1.500l-9 5 9 2.500z" fill="#0a0" />
    <path d="M0 0v32" stroke="#00f" strokeWidth="2" />
    <path d="M-3 30h6L0 41z" fill="#00a" />
    <text x="31" y="12" fill="#d00">X</text>
    <text x="-39" y="12" fill="#0c0">Y</text>
    <text x="-3" y="52" fill="#00f">Z</text>
  </g>
);

const Model = () => (
  <svg width="1611" height="866" viewBox="2 134 1611 866" fill="none" className="absolute top-0 left-0">
    <defs>
      <linearGradient id="web" x1="0" y1="0" x2="0.060" y2="1" gradientUnits="objectBoundingBox">
        <stop offset="0" stopColor="#7070f2" /><stop offset="1" stopColor="#7d7df8" />
      </linearGradient>
    </defs>

    {/* fixed support at the left end */}
    <path d="M390.700 332.300L402.700 334.700 454 324.500 444 321.500z" fill="#84cc84" />
    <path d="M390.700 332.300l12 2.400v69.600l-12-2.300z" fill="#80ff80" />
    <path d="M402.700 334.700L454 324.500v67.500l-51.300 12.300z" fill="#40fa40" />
    <path d="M402.700 400L430 394.500l14 1-41.300 8.800z" fill="#3cdc3c" />

    {/* beam */}
    <path d="M428.500 345L1537 606v43h-18L428.500 389z" fill="url(#web)" />
    <path d="M428.500 345L454 351v43l-25.500-6z" fill="#5f76d6" />
    <path d="M420.700 343L439 339 1545 601 1528 604.500z" fill="#4b4b9e" />
    <path d="M421 344l1107 261.500" stroke="#6262d6" strokeWidth="2" />
    <path d="M420.700 388.500l10-2.500L1522 644.500v6L428 391.500z" fill="#4b4b9e" />
    <path d="M430 386l1092 258" stroke="#6060c8" strokeWidth="1.500" />
    <path d="M428 391.500l1094 259" stroke="#7474e0" strokeWidth="1" />

    {/* supports */}
    <ellipse cx="986" cy="511" rx="14" ry="14" fill="#5f78de" />
    <Support x={982.7} y={495} />
    <ellipse cx="980" cy="510.500" rx="14.700" ry="15.500" fill="#38e838" />
    <path d="M969 524.500L982.700 513l13 9-4 3.500-20 1z" fill="#40ff40" />
    <path d="M982.700 520.500l12-.5 140 33.500v5.500z" fill="#4b4b9e" />
    <Support x={1537} y={625} />
    <ellipse cx="1537" cy="641.500" rx="17.300" ry="16" fill="#36e436" />
    <path d="M1522 652l15-9.500 15 9.500-7 5h-16z" fill="#40ff40" />

    {/* moment diagram */}
    <g strokeWidth="1.200">
      <path d="M428.500 308L484 353.700 537.700 390 428.500 364.500zM834 460L871.700 454 927.500 437 982.700 412.700 1038.300 469 1093.700 517l7.300 6z" stroke="#f00" />
      <path d="M537.700 390L594.700 421 650 442l55.500 16 55.500 6.200 55.500-1.500L834 460zM1101 523l48 34.500 55.500 33.500 55.500 25 55 17.500 55.500 9.500 55.500 2 55.500-6 55.500-14z" stroke="#00f" />
      {BASE.map(([x, y], i) => (
        <path key={i} d={`M${x} ${y}V${MOMENT[i]}`} stroke={MOMENT[i] < y ? '#f00' : '#00f'} />
      ))}
    </g>
    <path d="M1528 604.500l17-3.500M1537 603v22" stroke="#e01030" strokeWidth="1.500" />
    <rect x="427" y="306.500" width="3" height="3" fill="#f00" />
    <rect x="981" y="411" width="3" height="3" fill="#f00" />
    <rect x="981" y="493.500" width="4" height="3" fill="#700" />
    <rect x="1535" y="623" width="4" height="4" fill="#700" />
    <rect x="704" y="457" width="3" height="3" fill="#00f" />
    <rect x="1313.500" y="632" width="3" height="3" fill="#00f" />

    <Axes x={428.5} y={364.5} />
    <Axes x={57} y={873.5} />

    <g fontSize="12" fontWeight="bold" fontFamily="Liberation Sans">
      <text x="429" y="300" textAnchor="middle" fill="#f00">-0.564</text>
      <text x="983" y="404" textAnchor="middle" fill="#f00">-0.825</text>
      <text x="706.500" y="473" textAnchor="middle" fill="#00f">0.279</text>
      <text x="1315" y="649" textAnchor="middle" fill="#00f">0.605</text>
    </g>
  </svg>
);

/* highlight boxes and arrow laid over the navigator */
const Callouts = () => (
  <svg width="360" height="760" viewBox="2 134 360 760" fill="none" className="pointer-events-none absolute top-0 left-0">
    <g className="drop-shadow-[4px_4px_2px_rgba(0,0,0,0.45)]">
      <rect x="47.500" y="356.500" width="281" height="46" stroke="#c00000" strokeWidth="3" />
      <rect x="89.500" y="823.500" width="74" height="30" stroke="#c00000" strokeWidth="3" />
      <path d="M103.500 821L86 424" stroke="#c00000" strokeWidth="4" />
      <path d="M84 405l11 21H76z" fill="#c00000" />
    </g>
  </svg>
);

const StatusCell = ({ label, width, up }) => (
  <button
    type="button"
    className={`mr-0.5 h-[26px] shrink-0 border pb-1 pl-0.5 text-left text-[13px] text-[#25272b] ${width} ${up ? 'border-t-white border-r-[#888] border-b-[#888] border-l-white' : 'border-t-black border-r-white border-b-white border-l-black'}`}
  >
    {label}
  </button>
);

const App = () => {
  return (
    <div className="flex min-h-screen flex-col overflow-hidden border-t border-r border-t-[#74602f] border-r-[#6d6a60] bg-[#d0d4dd] font-['Open_Sans','Noto_Sans',sans-serif]">
      {/* Title bar */}
      <header className="flex h-[37px] shrink-0 items-center bg-white pb-0.5 pl-2">
        <svg width="20" height="20" viewBox="0 0 20 20" fill="none" className="overflow-visible">
          <path d="M5 6l7-5 7 3v8l-6 6-8-3z" fill="#7f97c2" stroke="#42557e" />
          <path d="M6 9q3-7 7-7M9 11q2-7 7-8M12 14q1-8 6-9" stroke="#dbe5f5" strokeWidth="1.300" />
          <text x="1" y="18" fontSize="13" fontWeight="bold" fontFamily="Liberation Sans" fill="#f0b428" stroke="#6b4d10" strokeWidth=".6">5</text>
        </svg>
        <h1 className="pl-1.5 text-sm text-black">RFEM 5.22.03 x64 Student - [004576_RFEM - Model File*]</h1>
        <div className="ml-auto flex pr-px">
          <button type="button" aria-label="Minimize" className="flex h-8 w-[59px] items-center justify-center">
            <svg width="12" height="12" viewBox="0 0 12 12"><path d="M0 6.500h12" stroke="#000" /></svg>
          </button>
          <button type="button" aria-label="Maximize" className="flex h-8 w-[58px] items-center justify-center">
            <svg width="12" height="12" viewBox="0 0 12 12" fill="none"><path d="M.5 .5h11v11H.5z" stroke="#000" /></svg>
          </button>
          <button type="button" aria-label="Close" className="flex h-8 w-[59px] items-center justify-center">
            <svg width="12" height="12" viewBox="0 0 12 12"><path d="M0 0l12 12M12 0L0 12" stroke="#000" strokeWidth="1.100" /></svg>
          </button>
        </div>
      </header>

      {/* Menu bar */}
      <nav className="flex h-[30px] shrink-0 items-center pl-1">
        <svg width="4" height="14" viewBox="0 0 4 14"><path d="M1.500 1v12" stroke="#fff" strokeWidth="2" strokeDasharray="2 2" /></svg>
        <svg width="20" height="17" viewBox="0 0 20 17" fill="none" className="mr-[11px] ml-0.5">
          <rect width="20" height="17" fill="#232a6c" />
          <path d="M0 11.500h20M11 1v15M5 5v11" stroke="#fff" strokeWidth="1.800" />
          <path d="M11 2l-6 9M11 2l8 9M5 6l-4 5" stroke="#fff" strokeWidth="1.200" />
        </svg>
        <div className="flex gap-[15px] text-[13px] text-[#54575f]">
          {MENU.map(([before, key, after]) => (
            <button key={key} type="button"><span>{before}</span><span className="underline underline-offset-2">{key}</span>{after}</button>
          ))}
        </div>
        <div className="ml-auto flex gap-2.5 pt-1 pr-2">
          <button type="button" aria-label="Minimize document">
            <svg width="10" height="10" viewBox="0 0 10 10"><path d="M1 8h7" stroke="#666" strokeWidth="1.500" /><path d="M2 9.500h7" stroke="#fff" /></svg>
          </button>
          <button type="button" aria-label="Restore document">
            <svg width="10" height="10" viewBox="0 0 10 10" fill="none"><path d="M3 3V1h6v5H7M1 3.500h6V8H1zM3 1.500h6" stroke="#777" strokeWidth="1.200" /></svg>
          </button>
          <button type="button" aria-label="Close document">
            <svg width="10" height="10" viewBox="0 0 10 10"><path d="M1 1l8 8M9 1L1 9" stroke="#777" strokeWidth="2" /></svg>
          </button>
        </div>
      </nav>

      {/* Toolbars */}
      <div className="flex h-8 shrink-0 gap-px pl-px">
        <ToolGroup items={ROW1_FILE} />
        <ToolGroup items={ROW1_GRID} />
        <ToolGroup items={ROW1_EXPORT} />
      </div>
      <div className="flex h-8 shrink-0 gap-px pl-px">
        <ToolGroup items={ROW2_MODEL} />
        <ToolGroup items={ROW2_VIEW} />
        <ToolGroup items={ROW2_RESULT} />
      </div>

      {/* Work area */}
      <main className="relative flex flex-1 flex-col justify-between overflow-hidden border-t-2 border-r border-l-2 border-t-[#6e7076] border-r-[#9a9a9a] border-l-[#8a8c92] bg-white px-1 pt-1 pb-1.5 font-['Liberation_Sans',sans-serif] text-[11px] leading-[14px] text-black">
        <Model />
        <div className="relative pt-px">
          <p>Internal Forces M-y [kipft]</p>
          <p>LC1</p>
        </div>
        <p className="relative">Max M-y: 0.605, Min M-y: -0.825 kipft</p>
        <div className="contents font-['Open_Sans','Noto_Sans',sans-serif]">
          <Navigator />
        </div>
        <Callouts />
      </main>

      {/* Status bar */}
      <footer className="relative flex h-[30px] shrink-0 items-end border-t-2 border-b border-t-[#b9bcc2] border-b-[#3c3d40] bg-linear-to-b from-[#e4e6eb] via-[#a5abb3] via-40% to-[#b9bcc5] font-['Liberation_Sans',sans-serif]">
        <div className="flex flex-1 justify-end">
          <StatusCell label="SNAP" width="w-[42px]" />
          <StatusCell label="GRID" width="w-10" up />
          <StatusCell label="CARTES" width="w-16 pl-1.5" />
          <StatusCell label="OSNAP" width="w-[53px]" />
          <StatusCell label="GLINES" width="w-[54px]" />
          <StatusCell label="DXF" width="w-[33px]" />
        </div>
        <div className="flex h-6 w-[518px] shrink-0">
          <span className="w-[189px] border-r border-l border-[#94979e]"></span>
          <span className="w-[89px] border-r border-[#94979e]"></span>
          <span className="w-[74px] border-r border-[#94979e]"></span>
          <span className="w-[74px] border-r border-[#94979e]"></span>
        </div>
        <div className="absolute right-0 bottom-0 h-[9px] w-[46px] overflow-hidden border-t border-l border-[#777] bg-white pl-1.5 text-sm leading-5 text-[#44506a]">Model</div>
      </footer>
    </div>
  );
};

export default App;
